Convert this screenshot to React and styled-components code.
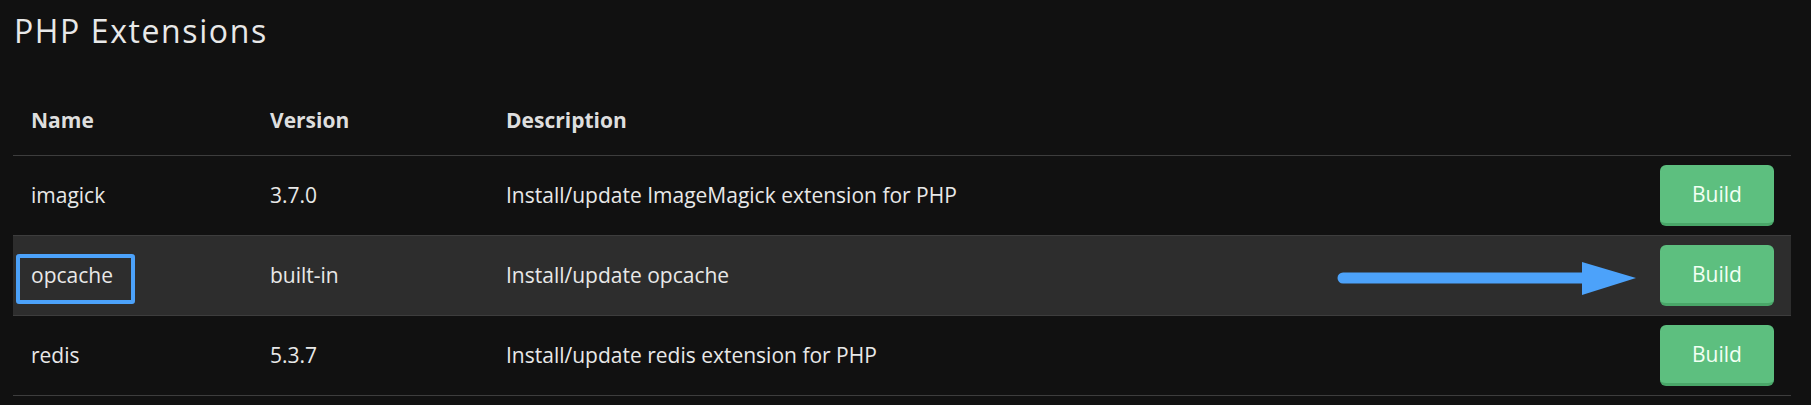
import styled, { createGlobalStyle } from 'styled-components'

const GlobalStyle = createGlobalStyle`
  html, body {
    margin: 0;
    padding: 0;
    background: #111111;
  }
  body {
    font-family: "Open Sans", "Noto Sans", sans-serif;
    color: #e6e6e6;
  }
`

const Page = styled.div`
  padding: 6px 20px 0 13px;
`

const Title = styled.h2`
  margin: 0;
  padding-left: 1px;
  font-family: "Open Sans", sans-serif;
  font-weight: 400;
  font-size: 32px;
  letter-spacing: 1.6px;
  line-height: 50px;
  color: #e8e8e8;
`

const Table = styled.table`
  width: 100%;
  margin-top: 19px;
  border-collapse: collapse;
  table-layout: fixed;
`

const HeadCell = styled.th`
  height: 80px;
  box-sizing: border-box;
  padding: 10px 18px 0;
  text-align: left;
  font-size: 21px;
  font-weight: 700;
  color: #dedede;
  border-bottom: 1px solid #3d3d3d;
  width: ${p => p.$width || 'auto'};
`

const Row = styled.tr`
  background: ${p => (p.$active ? '#2d2d2d' : 'transparent')};
`

const Cell = styled.td`
  height: 79px;
  padding: 0 18px;
  font-size: 21px;
  color: #e8e8e8;
  border-bottom: 1px solid #3d3d3d;
  position: relative;
  white-space: nowrap;
`

const ActionCell = styled(Cell)`
  text-align: right;
  padding-right: 17px;
`

const BuildButton = styled.button`
  width: 114px;
  height: 61px;
  border: none;
  border-bottom: 3px solid #49a668;
  border-radius: 6px;
  background: #5dbf7f;
  color: #f2fff4;
  font-family: "Open Sans", sans-serif;
  font-size: 21px;
  cursor: pointer;
  vertical-align: middle;
`

const Highlight = styled.span`
  position: absolute;
  left: 3px;
  top: 18px;
  width: 111px;
  height: 42px;
  border: 4px solid #4ca2fa;
  border-radius: 3px;
  pointer-events: none;
`

const Arrow = styled.svg`
  position: absolute;
  right: 155px;
  top: 26px;
  overflow: visible;
`

const extensions = [
  { name: 'imagick', version: '3.7.0', description: 'Install/update ImageMagick extension for PHP' },
  { name: 'opcache', version: 'built-in', description: 'Install/update opcache', active: true },
  { name: 'redis', version: '5.3.7', description: 'Install/update redis extension for PHP' }
]

const App = () => (
  <>
    <GlobalStyle />
    <Page>
      <Title>PHP Extensions</Title>
      <Table>
        <thead>
          <tr>
            <HeadCell $width="239px">Name</HeadCell>
            <HeadCell $width="236px">Version</HeadCell>
            <HeadCell>Description</HeadCell>
            <HeadCell $width="200px" />
          </tr>
        </thead>
        <tbody>
          {extensions.map(ext => (
            <Row key={ext.name} $active={ext.active}>
              <Cell>
                {ext.name}
                {ext.active && <Highlight />}
              </Cell>
              <Cell>{ext.version}</Cell>
              <Cell>{ext.description}</Cell>
              <ActionCell>
                {ext.active && (
                  <Arrow width="298" height="34" viewBox="0 0 298 34">
                    <line x1="5" y1="16" x2="250" y2="16" stroke="#4ca2fa" strokeWidth="11" strokeLinecap="round" />
                    <polygon points="244,0 298,16 244,33" fill="#4ca2fa" />
                  </Arrow>
                )}
                <BuildButton>Build</BuildButton>
              </ActionCell>
            </Row>
          ))}
        </tbody>
      </Table>
    </Page>
  </>
)

export default App
